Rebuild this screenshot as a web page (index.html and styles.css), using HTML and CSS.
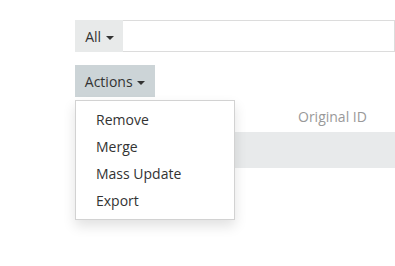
FILE: index.html
```html
<!DOCTYPE html>
<html>
<head>
    <title>Records</title>
    <link rel="stylesheet" href="styles.css">
</head>
<body>
    <div class="page">
        <div class="search-group">
            <button class="filter-btn">All <span class="caret"></span></button>
            <input type="text" class="search-input">
        </div>

        <div class="actions">
            <button class="actions-btn">Actions <span class="caret"></span></button>
            <ul class="dropdown-menu">
                <li><a href="#">Remove</a></li>
                <li><a href="#">Merge</a></li>
                <li><a href="#">Mass Update</a></li>
                <li><a href="#">Export</a></li>
            </ul>
        </div>

        <table class="list-table">
            <thead>
                <tr>
                    <th class="col-name"></th>
                    <th class="col-id">Original ID</th>
                </tr>
            </thead>
            <tbody>
                <tr class="row-odd">
                    <td></td>
                    <td></td>
                </tr>
            </tbody>
        </table>
    </div>
</body>
</html>
```

FILE: styles.css
```css
html, body {
  margin: 0;
  min-height: 266px;
  overflow: hidden;
}

body {
  font-family: "Open Sans", Arial, sans-serif;
  font-size: 14px;
  color: #333;
  background-color: #fff;
}

.page {
  padding: 20px 0 0 75px;
  min-height: 246px;
}

.search-group {
  display: flex;
  height: 32px;
}

.filter-btn {
  font-family: inherit;
  font-size: 14px;
  color: #333;
  background-color: #e8eaea;
  border: none;
  padding: 0 9px 0 10px;
  width: 48px;
  height: 32px;
  white-space: nowrap;
}

.search-input {
  flex: 1;
  height: 32px;
  box-sizing: border-box;
  border: 1px solid #dcdcdc;
  border-left: none;
  outline: none;
  margin: 0;
}

.caret {
  display: inline-block;
  width: 0;
  height: 0;
  margin-left: 1px;
  vertical-align: middle;
  border-top: 4px solid #333;
  border-left: 4px solid transparent;
  border-right: 4px solid transparent;
}

.actions {
  position: relative;
  z-index: 10;
  margin-top: 13px;
  height: 32px;
}

.actions-btn {
  font-family: inherit;
  font-size: 14px;
  color: #333;
  background-color: #ccd4d7;
  border: none;
  height: 32px;
  width: 80px;
  padding: 0;
  white-space: nowrap;
}

.dropdown-menu {
  position: absolute;
  top: 35px;
  left: 0;
  width: 160px;
  box-sizing: border-box;
  margin: 0;
  padding: 5px 0;
  list-style: none;
  background-color: #fff;
  border: 1px solid #d2d2d2;
  box-shadow: 0 6px 12px rgba(0, 0, 0, 0.12);
}

.dropdown-menu a {
  display: block;
  padding: 3px 20px;
  line-height: 21px;
  color: #333;
  text-decoration: none;
}

.list-table {
  width: 320px;
  border-collapse: collapse;
  margin-top: 3px;
}

.list-table th {
  height: 32px;
  padding: 0;
  font-weight: normal;
  color: #999;
  text-align: left;
}

.col-name {
  width: 223px;
}

.list-table td {
  height: 36px;
  padding: 0;
}

.row-odd {
  background-color: #e8eaeb;
}
```
